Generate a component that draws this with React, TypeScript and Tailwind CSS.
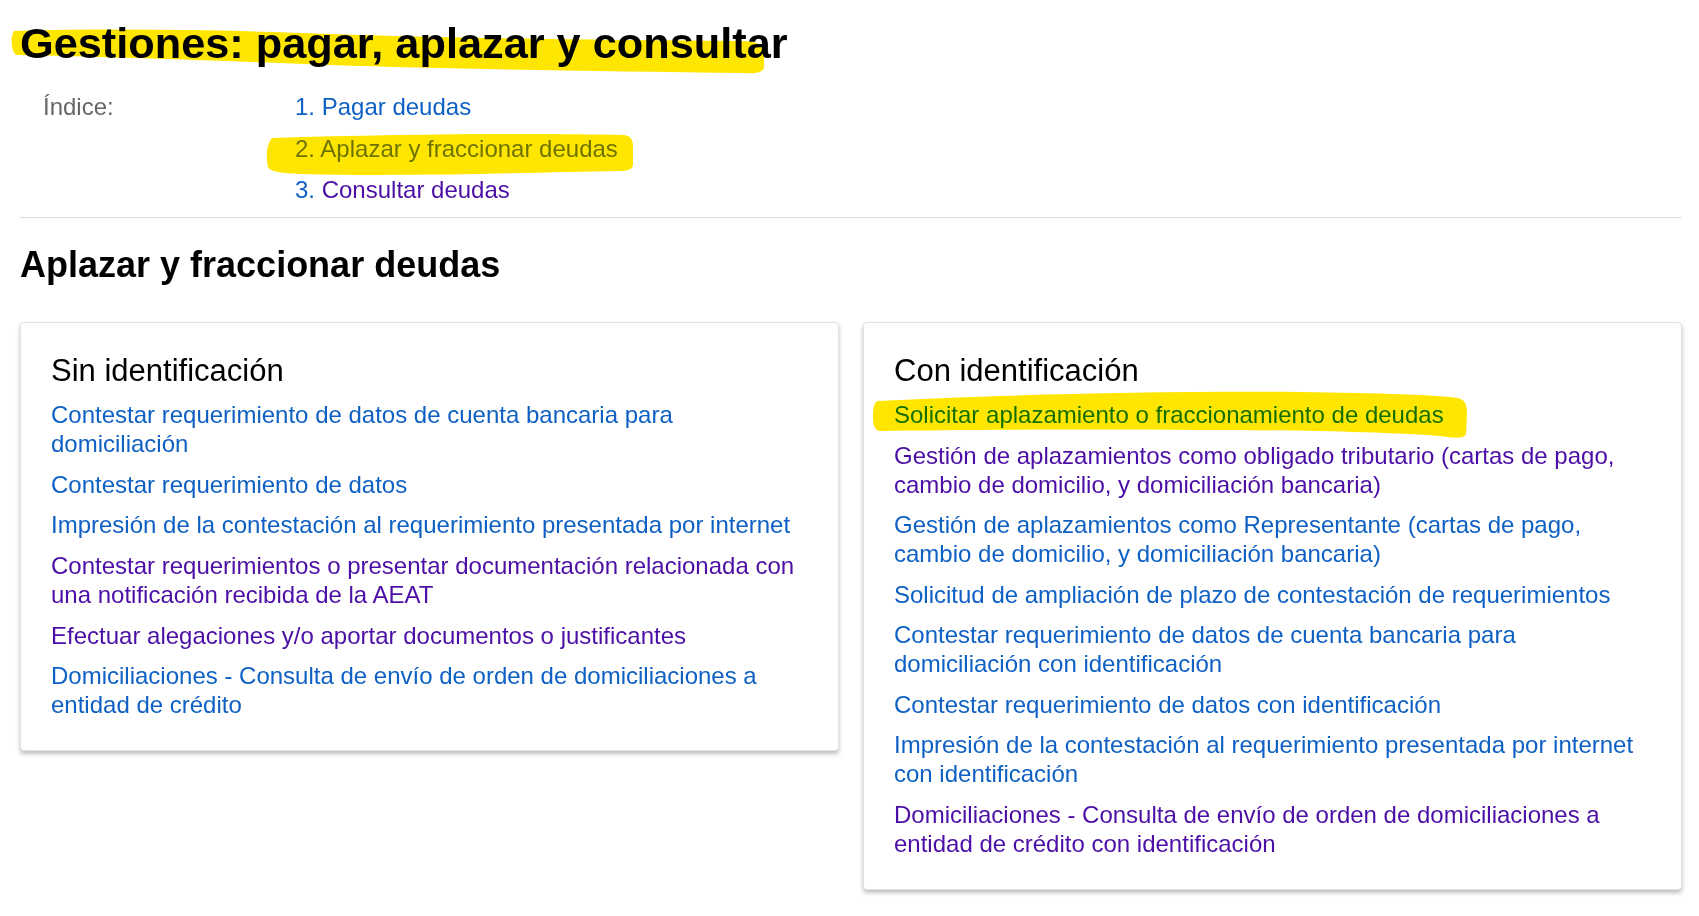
import React from "react";

type L = { t: string; v?: boolean };

const left: L[] = [
  { t: "Contestar requerimiento de datos de cuenta bancaria para domiciliación" },
  { t: "Contestar requerimiento de datos" },
  { t: "Impresión de la contestación al requerimiento presentada por internet" },
  { t: "Contestar requerimientos o presentar documentación relacionada con una notificación recibida de la AEAT", v: true },
  { t: "Efectuar alegaciones y/o aportar documentos o justificantes", v: true },
  { t: "Domiciliaciones - Consulta de envío de orden de domiciliaciones a entidad de crédito" },
];

const right: L[] = [
  { t: "Gestión de aplazamientos como obligado tributario (cartas de pago, cambio de domicilio, y domiciliación bancaria)", v: true },
  { t: "Gestión de aplazamientos como Representante (cartas de pago, cambio de domicilio, y domiciliación bancaria)" },
  { t: "Solicitud de ampliación de plazo de contestación de requerimientos" },
  { t: "Contestar requerimiento de datos de cuenta bancaria para domiciliación con identificación" },
  { t: "Contestar requerimiento de datos con identificación" },
  { t: "Impresión de la contestación al requerimiento presentada por internet con identificación" },
  { t: "Domiciliaciones - Consulta de envío de orden de domiciliaciones a entidad de crédito con identificación", v: true },
];

function Link({ item }: { item: L }) {
  return (
    <li>
      <a className={item.v ? "text-[#4b0ea6]" : "text-[#0e60c4]"}>{item.t}</a>
    </li>
  );
}

export default function App() {
  return (
    <div className="relative w-[1699px] min-h-[916px] bg-white font-['Liberation_Sans',Arial,sans-serif] text-black">
      <div className="w-[1662px] ml-[20px]">
        <h1 className="pt-[17px] text-[43.3px] leading-[52px] font-bold">
          Gestiones: pagar, aplazar y consultar
        </h1>

        <div className="mt-[17px] flex text-[24px] leading-[41.5px]">
          <div className="w-[275px] pl-[23px] text-[#666666]">Índice:</div>
          <ol>
            <li>
              <span className="text-[#0e60c4]">1. </span>
              <a className="text-[#0e60c4]">Pagar deudas</a>
            </li>
            <li className="text-[#6e8018]">
              <span>2. </span>
              <a>Aplazar y fraccionar deudas</a>
            </li>
            <li>
              <span className="text-[#0e60c4]">3. </span>
              <a className="text-[#4b0ea6]">Consultar deudas</a>
            </li>
          </ol>
        </div>

        <div className="mt-[6.5px] border-t border-[#dddddd]" />

        <h2 className="mt-[25px] text-[36px] leading-[43px] font-bold">Aplazar y fraccionar deudas</h2>

        <div className="mt-[36px] grid grid-cols-2 gap-[24px] items-start">
          <div className="rounded-[4px] border border-[#e2e2e2] bg-white pt-[29px] px-[30px] pb-[31px] shadow-[0_3px_4px_rgba(0,0,0,0.25)]">
            <h3 className="text-[31px] leading-[37px] mb-[11px]">Sin identificación</h3>
            <ul className="flex flex-col gap-[11.7px] text-[24px] leading-[29px]">
              {left.map((it, i) => (
                <Link key={i} item={it} />
              ))}
            </ul>
          </div>
          <div className="rounded-[4px] border border-[#e2e2e2] bg-white pt-[29px] px-[30px] pb-[31px] shadow-[0_3px_4px_rgba(0,0,0,0.25)]">
            <h3 className="text-[31px] leading-[37px] mb-[11px]">Con identificación</h3>
            <ul className="flex flex-col gap-[11.5px] text-[24px] leading-[29px]">
              <li>
                <a className="text-[#157a18]">Solicitar aplazamiento o fraccionamiento de deudas</a>
              </li>
              {right.map((it, i) => (
                <Link key={i} item={it} />
              ))}
            </ul>
          </div>
        </div>
      </div>

      <svg
        className="pointer-events-none absolute left-0 top-0 mix-blend-multiply"
        width="1699"
        height="916"
        viewBox="0 0 1699 916"
      >
        <g fill="#ffe600">
          <path d="M14,31 C120,28 230,30 330,34 C450,38 600,40 740,41 C758,41 764,45 764,52 L764,66 C764,72 758,74 744,73 C600,71 450,69 330,65 C230,61 120,57 16,55 C11,50 10,38 14,31 Z" />
          <path d="M272,138 C400,134 540,133 624,135 C631,136 633,140 633,146 L633,164 C633,169 629,171 620,171 C540,172 420,177 300,174 C282,173 270,172 268,167 C266,158 266,145 272,138 Z" />
          <path d="M878,401 C1000,395 1150,391 1300,392 C1380,393 1440,395 1458,398 C1466,400 1467,406 1467,414 L1466,434 C1464,439 1455,438 1440,436 C1380,432 1300,430 1200,430 C1080,429 960,430 880,431 C874,430 873,424 873,417 C873,408 874,402 878,401 Z" />
        </g>
      </svg>
    </div>
  );
}
